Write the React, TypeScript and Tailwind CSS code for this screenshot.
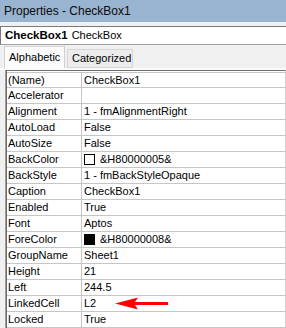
import React from "react";

interface Prop {
  name: string;
  value: string;
  swatch?: string;
}

const props: Prop[] = [
  { name: "(Name)", value: "CheckBox1" },
  { name: "Accelerator", value: "" },
  { name: "Alignment", value: "1 - fmAlignmentRight" },
  { name: "AutoLoad", value: "False" },
  { name: "AutoSize", value: "False" },
  { name: "BackColor", value: "&H80000005&", swatch: "bg-white" },
  { name: "BackStyle", value: "1 - fmBackStyleOpaque" },
  { name: "Caption", value: "CheckBox1" },
  { name: "Enabled", value: "True" },
  { name: "Font", value: "Aptos" },
  { name: "ForeColor", value: "&H80000008&", swatch: "bg-black" },
  { name: "GroupName", value: "Sheet1" },
  { name: "Height", value: "21" },
  { name: "Left", value: "244.5" },
  { name: "LinkedCell", value: "L2" },
  { name: "Locked", value: "True" },
];

const Row: React.FC<{ p: Prop; first: boolean }> = ({ p, first }) => (
  <div
    className={`flex border-b border-[#c6c6c6] ${first ? "h-[15px]" : "h-[16px]"}`}
  >
    <div className="w-[75px] shrink-0 border-r border-[#c6c6c6] pl-[1px] flex items-center leading-none whitespace-nowrap overflow-hidden">
      {p.name}
    </div>
    <div className="flex-1 pl-[2px] flex items-center leading-none whitespace-nowrap overflow-hidden">
      {p.swatch && (
        <span
          className={`inline-block w-[11px] h-[11px] border border-black mr-[5px] ${p.swatch}`}
        />
      )}
      {p.value}
    </div>
  </div>
);

const App = () => {
  return (
    <div className="relative w-[286px] h-[328px] overflow-hidden bg-[#f0f0f0] text-black text-[11px] font-['Liberation_Sans',Arial,sans-serif]">
      {/* title bar */}
      <div className="h-[22px] bg-[#99b4d1] flex items-center pl-[4px] text-[12px] text-[#0a0a0a]">
        Properties - CheckBox1
      </div>
      <div className="h-[4px]" />

      {/* object combo */}
      <div className="h-[19px] bg-white border-t border-l border-[#7a7a7a] border-b-[#a0a0a0] border-b flex items-center pl-[4px] gap-[4px] whitespace-nowrap">
        <span className="font-bold text-[11.5px]">CheckBox1</span>
        <span>CheckBox</span>
      </div>

      {/* tabs */}
      <div className="h-[23px] flex items-end pl-[4px] gap-[2px]">
        <div className="h-[22px] w-[61px] bg-[#fbfbfb] border-t border-l border-r border-[#d0d0d0] flex items-center pl-[4px]">
          Alphabetic
        </div>
        <div className="h-[19px] w-[66px] bg-[#ececec] border border-[#d6d6d6] flex items-center pl-[4px]">
          Categorized
        </div>
      </div>
      <div className="h-[2px] bg-[#fafafa]" />

      {/* grid */}
      <div className="ml-[5px] border-l border-[#a0a0a0]">
        <div className="border-l border-[#696969] border-t border-t-[#6e6e6e] bg-white border-r border-r-[#d4d4d4]">
          <div className="border-t border-white">
            <div className="border-t border-[#c6c6c6]">
              {props.map((p, i) => (
                <Row key={p.name} p={p} first={i === 0} />
              ))}
            </div>
          </div>
        </div>
      </div>

      {/* red arrow */}
      <svg
        className="absolute left-[114px] top-[297px]"
        width="54"
        height="14"
        viewBox="0 0 54 14"
      >
        <line x1="18" y1="6.5" x2="54" y2="6.5" stroke="#ff0000" strokeWidth="3" />
        <polygon points="1,6.5 24,0.5 20,6.5 24,12.5" fill="#ff0000" />
      </svg>
    </div>
  );
};

export default App;
